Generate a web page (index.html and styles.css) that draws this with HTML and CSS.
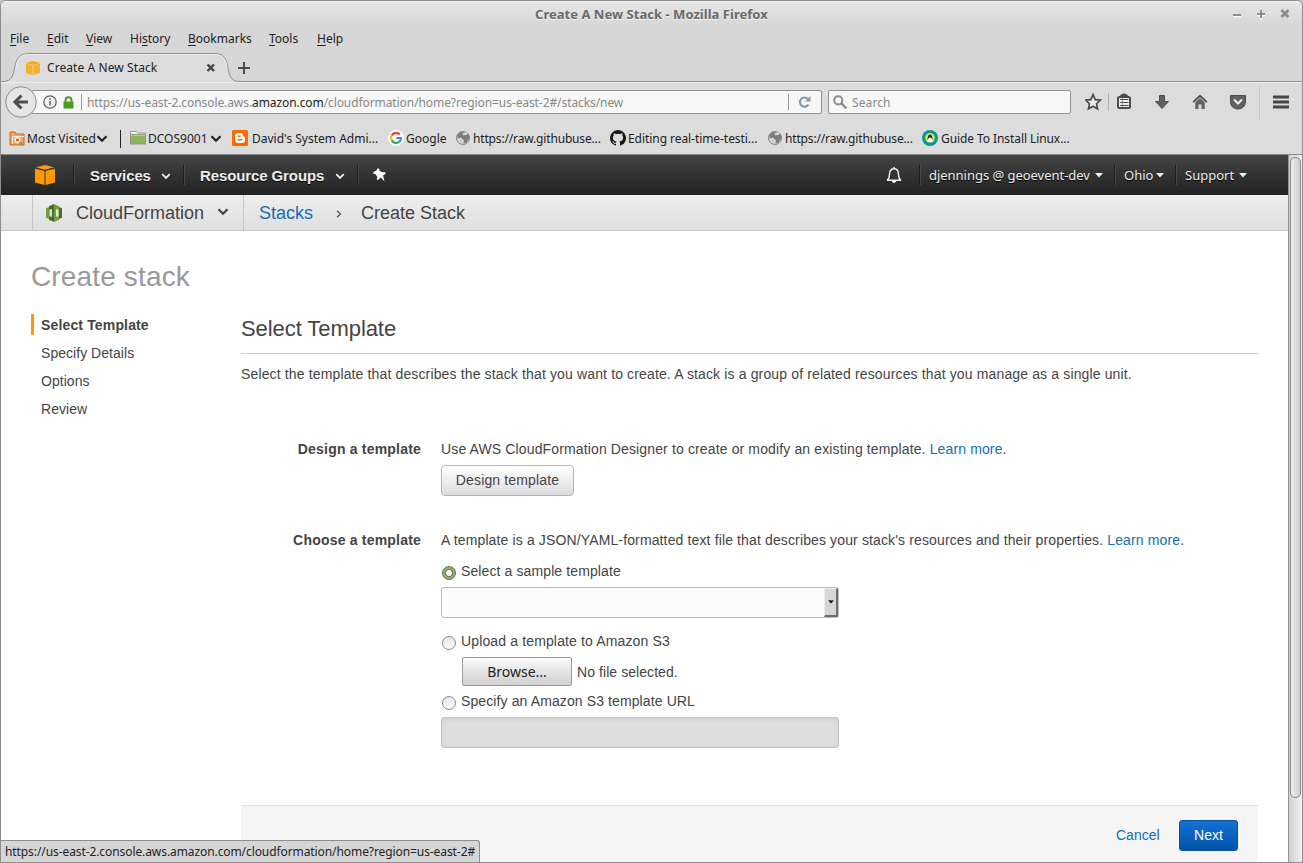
FILE: index.html
```html
<!DOCTYPE html>
<html lang="en">
<head>
<meta charset="utf-8">
<title>Create A New Stack</title>
<link rel="stylesheet" href="styles.css">
</head>
<body>
<svg class="defs" width="0" height="0" aria-hidden="true">
  <symbol id="chev" viewBox="0 0 12 8"><path d="M1.500 1.200 6 5.700l4.500-4.500" fill="none" stroke="currentColor" stroke-width="2.200"/></symbol>
  <symbol id="caret" viewBox="0 0 8 5"><path d="M0 0h8L4 4.500z" fill="currentColor"/></symbol>
  <symbol id="globe" viewBox="0 0 16 16"><circle cx="8" cy="8" r="6.500" fill="#d2d2d2" stroke="#858585"/><path d="M2 5.500 4 3l3-1.500 2 .5-1.500 2 1 1.500 2.500-.5 2-1.500 1.500 3-1 3.500-2.500 3-2.500.5.5-3-1.500-1.500-1.500-1.500-3 1z" fill="#7d7d7d"/><path d="m10 3.500 1.500-1 1 1L11 4.800z" fill="#eee"/></symbol>
</svg>
<div class="window">
  <header class="titlebar">
    <h1 class="title">Create A New Stack - Mozilla Firefox</h1>
    <svg class="win-controls" width="60" height="14" viewBox="0 0 60 14"><g fill="none" stroke="#fff" stroke-width="2.500" transform="translate(0 1)"><path d="M1 8h8M25 7h8M29 3v8"/></g><g fill="none" stroke="#8c8c8c" stroke-width="2"><path d="M1 8h8M25 7h8M29 3v8"/><path d="m49.500 3 7 7m0-7-7 7" stroke-width="2.600"/></g></svg>
  </header>
  <nav class="menubar">
    <span class="mi m1"><u>F</u>ile</span><span class="mi m2"><u>E</u>dit</span><span class="mi m3"><u>V</u>iew</span><span class="mi m4">Hi<u>s</u>tory</span><span class="mi m5"><u>B</u>ookmarks</span><span class="mi m6"><u>T</u>ools</span><span class="mi m7"><u>H</u>elp</span>
  </nav>
  <div class="tabbar">
    <svg class="tab-shape" width="238" height="31" viewBox="0 0 238 31"><path d="M0 30.500h2c8 0 10-5 11.500-13 1.500-10 5-15 14.500-15h185c9 0 12.500 4.500 14 14 1.500 9 3.500 14 11 14V31H0z" fill="#dcdcdc"/><path d="M0 30.500h2c8 0 10-5 11.500-13 1.500-10 5-15 14.500-15h185c9 0 12.500 4.500 14 14 1.500 9 3.500 14 11 14" fill="none" stroke="#8b9096"/><path d="M15 16c1.500-9 5-12.500 13-12.500h185c8 0 11.500 3.500 13 12.500" fill="none" stroke="#ececec"/></svg>
    <div class="tab">
      <svg width="16" height="16" viewBox="0 0 16 16"><path d="m1 3.500 6.700 1.800V15L1 13zM15 3.500 8.300 5.300V15l6.700-2z" fill="#f2b02c"/><path d="m1 3 7-2 7 2-7 1.900z" fill="#f7a90b"/></svg>
      <span class="tab-name">Create A New Stack</span>
      <svg class="tab-x" width="10" height="10" viewBox="0 0 10 10"><path d="m1.500 1.500 6.500 6.500m0-6.500L1.500 8" stroke="#444" stroke-width="2.400"/></svg>
      <svg class="tab-plus" width="14" height="14" viewBox="0 0 14 14"><path d="M1 7h12M7 1v12" stroke="#4c4c4c" stroke-width="2"/></svg>
    </div>
  </div>
  <div class="urlbar">
    <svg class="back" width="34" height="34" viewBox="0 0 34 34"><circle cx="17" cy="17" r="15.300" fill="#e5e5e5" stroke="#8b8b8b"/><path d="M17.500 10.500 11 17l6.500 6.500M12 17h12" fill="none" stroke="#4d4d4d" stroke-width="3"/></svg>
    <div class="address">
      <svg class="info" width="14" height="14" viewBox="0 0 14 14"><circle cx="7" cy="7" r="6.200" fill="none" stroke="#5a5a5a" stroke-width="1.200"/><path d="M7 6v4.500M7 3.300v1.600" stroke="#5a5a5a" stroke-width="1.500"/></svg>
      <svg class="lock" width="11" height="13" viewBox="0 0 11 13"><path d="M2.500 7V4.200a3 3 0 0 1 6 0V7" fill="none" stroke="#4b9b22" stroke-width="2"/><rect x=".5" y="5.500" width="10" height="7" rx=".8" fill="#4b9b22"/></svg>
      <i class="vr"></i>
      <span class="url">https://us-east-2.console.aws.<b>amazon.com</b>/cloudformation/home?region=us-east-2#/stacks/new</span>
      <i class="vr"></i>
      <svg class="reload" width="14" height="14" viewBox="0 0 14 14"><path d="M10.500 9.500A4.600 4.600 0 1 1 9.800 3.800" fill="none" stroke="#8b98a3" stroke-width="2.200"/><path d="M12.500 1v5.500H7z" fill="#8b98a3"/></svg>
    </div>
    <div class="search">
      <svg width="14" height="14" viewBox="0 0 14 14"><circle cx="5.300" cy="5.300" r="4.100" fill="none" stroke="#8d8d8d" stroke-width="2"/><path d="m8.300 8.300 5 5" stroke="#8d8d8d" stroke-width="2.400"/></svg>
      <span>Search</span>
    </div>
    <svg class="tools" width="218" height="36" viewBox="0 0 218 36">
      <path d="m8 10.200 2.200 4.900 5.100.5-3.800 3.600 1 5.100L8 21.700l-4.500 2.600 1-5.100L.7 15.600l5.100-.5z" transform="translate(0 .5)" fill="#eee" stroke="#4b4b4b" stroke-width="1.700"/>
      <path d="M23.500 9v18" stroke="#b2b2b2"/>
      <path d="M36 12.500v-1l3-1.500 3 1.500v1" fill="#555" stroke="#4b4b4b" stroke-width="1.500"/><rect x="33" y="13" width="12" height="11" rx="1.500" fill="#eee" stroke="#4b4b4b" stroke-width="2"/><path d="M35 15.500h8.500M35 18.500h8.500M35 21.500h8.500" stroke="#4b4b4b" stroke-width="1"/><path d="M37.500 14v9" stroke="#777" stroke-width=".7"/>
      <path d="M74.500 11.500h5v6h4l-6.500 7-6.500-7h4z" fill="#606060" stroke="#4b4b4b"/>
      <path d="m108.200 18.200 6.800-6.400 6.800 6.400" fill="none" stroke="#4b4b4b" stroke-width="1.800"/><path d="M110.300 18.500 115 14l4.700 4.500V25h-3.200v-4.500h-3V25h-3.200z" fill="#606060"/>
      <path d="M145.500 11.500h15v6c0 10-15 10-15 0z" fill="#606060" stroke="#4b4b4b"/><path d="m149 15.500 4 4 4-4" fill="none" stroke="#eee" stroke-width="2"/>
      <path d="M174.500 2v34" stroke="#cacaca"/>
      <path d="M188 13h16M188 18h16M188 23h16" stroke="#474747" stroke-width="3"/>
    </svg>
  </div>
  <div class="bookmarks">
    <svg class="bm-i" width="16" height="16" viewBox="0 0 16 16"><path d="M1 15V2h5l1 2h8v11z" fill="#e8a76a" stroke="#c96a1b"/><path d="M3.500 14V6.500H15" fill="none" stroke="#fff3e6"/><circle cx="8.500" cy="10" r="2.400" fill="#cf6d1d" stroke="#fff" stroke-width="1.300"/><path d="m10.500 12 3 2.500" stroke="#cf6d1d" stroke-width="1.500"/></svg>
    <span class="bm b1">Most Visited</span><svg class="chev" width="12" height="8"><use href="#chev"/></svg>
    <i class="bm-sep"></i>
    <svg class="bm-i" width="16" height="16" viewBox="0 0 16 16"><path d="M.5 5V1.500h6l1 1.500h8v2z" fill="#f5f5f5" stroke="#999"/><rect x=".5" y="4.500" width="15" height="9.500" fill="#8fb461" stroke="#8a9a7c"/><path d="M1 5.500h14" stroke="#b6d297"/></svg>
    <span class="bm b2">DCOS9001</span><svg class="chev" width="12" height="8"><use href="#chev"/></svg>
    <svg class="bm-i blogger" width="16" height="16" viewBox="0 0 16 16"><rect width="16" height="16" rx="1.500" fill="#ff6a00"/><path d="M6 3h2.500C11 3 11 5 11.200 6.500c2 .2 1.800 1 1.800 3.500 0 2-1 3-3 3H6c-2 0-3-1-3-3V6c0-2 1-3 3-3z" fill="#fff"/><path d="M6.200 6.300h2M6.200 9.800h3.600" stroke="#ff6a00" stroke-width="1.500" stroke-linecap="round"/></svg>
    <span class="bm b3">David's System Admi...</span>
    <svg class="bm-i" width="16" height="16" viewBox="0 0 16 16"><circle cx="8" cy="8" r="8" fill="#fff"/><g fill="none" stroke-width="2.200"><path d="M11.800 4.500A5 5 0 0 0 3.700 5.600" stroke="#ea4335"/><path d="M3.700 5.600a5 5 0 0 0 0 4.800" stroke="#fbbc05"/><path d="M3.700 10.400a5 5 0 0 0 7.500 1.400" stroke="#34a853"/><path d="M11.200 11.800A5 5 0 0 0 13 8H8.200" stroke="#4285f4"/></g></svg>
    <span class="bm b4">Google</span>
    <svg class="bm-i" width="16" height="16"><use href="#globe"/></svg>
    <span class="bm b5">https://raw.githubuse...</span>
    <svg class="bm-i" width="16" height="16" viewBox="0 0 16 16"><path fill="#171717" d="M8 0a8 8 0 0 0-2.530 15.590c.4.070.55-.17.55-.38v-1.490c-2.230.48-2.700-.95-2.700-.95-.36-.92-.89-1.170-.89-1.170-.73-.5.060-.49.060-.49.800.060 1.230.83 1.230.83.710 1.220 1.870.87 2.330.66.070-.52.280-.87.510-1.070-1.780-.2-3.640-.89-3.640-3.950 0-.87.310-1.590.82-2.150-.08-.2-.36-1.020.08-2.120 0 0 .67-.21 2.200.82a7.600 7.600 0 0 1 4 0c1.530-1.030 2.200-.82 2.200-.82.440 1.100.16 1.920.08 2.120.51.560.82 1.280.82 2.150 0 3.070-1.870 3.750-3.650 3.950.29.250.54.730.54 1.480v2.200c0 .21.150.46.550.38A8 8 0 0 0 8 0z"/></svg>
    <span class="bm b6">Editing real-time-testi...</span>
    <svg class="bm-i" width="16" height="16"><use href="#globe"/></svg>
    <span class="bm b5">https://raw.githubuse...</span>
    <svg class="bm-i" width="16" height="16" viewBox="0 0 16 16"><circle cx="8" cy="8" r="8" fill="#0d9597"/><circle cx="8" cy="7.800" r="4.800" fill="#e4ec52"/><path d="M5.500 10C5.500 6 6.500 4.500 8 4.500s2.500 1.500 2.500 5.500z" fill="#22302e"/><path d="M5.500 12c0-3 1-4.500 2.500-4.500s2.500 1.500 2.500 4.500z" fill="#fff"/></svg>
    <span class="bm b7">Guide To Install Linux...</span>
  </div>

  <div class="viewport">
    <main class="page">
      <nav class="aws-nav">
        <svg class="cube" width="20" height="20" viewBox="0 0 20 20"><path d="m0 3.700 9.500 2.300V20L0 17.500zM20 3.700 10.500 6v14l9.500-2.500zM10 0l9 2.300-9 2.400-9-2.400z" fill="#f90"/></svg>
        <i class="nav-sep"></i>
        <span class="nav-b services">Services</span><svg class="nav-chev" width="10" height="7" viewBox="0 0 12 8"><use href="#chev"/></svg>
        <i class="nav-sep"></i>
        <span class="nav-b groups">Resource Groups</span><svg class="nav-chev" width="10" height="7" viewBox="0 0 12 8"><use href="#chev"/></svg>
        <i class="nav-sep"></i>
        <svg class="pin" width="14" height="14" viewBox="0 0 14 14"><path d="M4.800.2 6.500 1l-.2 1.700 3 1.600 2.400-.2 1 1.400-2.600 2.100 1.400 5.800-3.700-3.800-2.900 2.500-1.200-.6.700-2.600-2-2.800-1.800-.2-.2-1.800 3-1.600z" fill="#fff"/></svg>
        <svg class="bell" width="16" height="18" viewBox="0 0 16 18"><path d="M1 14.200c3-1.400 2-4 2.600-7C4 4 5.700 2.800 8 2.800S12 4 12.400 7.200c.6 3-.4 5.600 2.600 7z" fill="none" stroke="#eee" stroke-width="1.400"/><path d="M6.500 2.500 8 .5l1.500 2zM5.800 14.800h4.400C10 17.600 6 17.600 5.800 14.800z" fill="#eee"/></svg>
        <i class="nav-sep"></i>
        <span class="nav-t user">djennings @ geoevent-dev</span><svg class="nav-caret" width="8" height="5"><use href="#caret"/></svg>
        <i class="nav-sep"></i>
        <span class="nav-t ohio">Ohio</span><svg class="nav-caret" width="8" height="5"><use href="#caret"/></svg>
        <i class="nav-sep"></i>
        <span class="nav-t support">Support</span><svg class="nav-caret" width="8" height="5"><use href="#caret"/></svg>
      </nav>
      <div class="crumbs">
        <div class="service">
          <svg width="16" height="18" viewBox="0 0 16 18"><path d="M8 0 3 2.200v13.600L8 18z" fill="#4b6d2c"/><path d="m8 0 5 2.200v13.600L8 18z" fill="#759c3e"/><path d="M0 4.200 3 3v12l-3-1.200z" fill="#759c3e"/><path d="m16 4.200-3-1.200v12l3-1.200z" fill="#4b6d2c"/><path d="M3.500 5.500 6 5.200v7.600l-2.500-.3zM10 5.200l2.500.3v7l-2.500.3z" fill="#dfe8d3"/></svg>
          <span class="service-name">CloudFormation</span>
          <svg class="crumb-chev" width="12" height="8"><use href="#chev"/></svg>
        </div>
        <a class="stacks">Stacks</a>
        <svg class="arrow" width="6" height="8" viewBox="0 0 6 8"><path d="m1 .7 3.500 3.300L1 7.300" fill="none" stroke="#555" stroke-width="1.300"/></svg>
        <span class="current">Create Stack</span>
      </div>
      <div class="content">
        <h2 class="heading">Create stack</h2>
        <div class="columns">
          <ol class="steps"><li class="on">Select Template</li><li>Specify Details</li><li>Options</li><li>Review</li></ol>
          <section class="form">
            <h3 class="subheading">Select Template</h3>
            <p class="intro">Select the template that describes the stack that you want to create. A stack is a group of related resources that you manage as a single unit.</p>
            <div class="row design">
              <div class="label">Design a template</div>
              <div class="field">
                <p class="desc d1">Use AWS CloudFormation Designer to create or modify an existing template. <a>Learn more</a>.</p>
                <button class="btn">Design template</button>
              </div>
            </div>
            <div class="row choose">
              <div class="label">Choose a template</div>
              <div class="field">
                <p class="desc d2">A template is a JSON/YAML-formatted text file that describes your stack's resources and their properties. <a>Learn more</a>.</p>
                <div class="radio"><i class="dot checked"></i><span class="r1">Select a sample template</span></div>
                <div class="select"><span class="drop"><svg width="6" height="4" viewBox="0 0 8 5"><use href="#caret"/></svg></span></div>
                <div class="radio"><i class="dot"></i><span class="r2">Upload a template to Amazon S3</span></div>
                <div class="file"><button class="browse">Browse...</button><span class="nofile">No file selected.</span></div>
                <div class="radio"><i class="dot"></i><span class="r3">Specify an Amazon S3 template URL</span></div>
                <div class="disabled"></div>
              </div>
            </div>
            <footer class="actions"><a class="cancel">Cancel</a><button class="next">Next</button></footer>
          </section>
        </div>
      </div>
    </main>
    <div class="scrollbar"><div class="thumb"></div></div>
  </div>
  <div class="status">https://us-east-2.console.aws.amazon.com/cloudformation/home?region=us-east-2#</div>
</div>
</body>
</html>
```
FILE: styles.css
```css
* { box-sizing: border-box; }
body { margin: 0; background: #c4c4c4; color: #222; font: 12px/18px "Noto Sans", sans-serif; overflow: hidden; }
h1, h2, h3, p, ol { margin: 0; padding: 0; font-weight: normal; }
svg { display: block; flex: none; }
i { flex: none; }
span, a { white-space: nowrap; }
.defs { position: absolute; }

.window { position: relative; display: flex; flex-direction: column; width: 1303px; height: 863px; border: 1px solid #8e8e8e; border-radius: 6px 6px 0 0; background: #d6d6d6; overflow: hidden; }

.titlebar { display: flex; align-items: center; height: 25px; padding-left: 534px; background: linear-gradient(#fff 0, #e6e6e6 1px, #d6d6d6); }
.title { width: 234px; font-size: 13px; letter-spacing: .03px; font-weight: bold; color: #696969; text-shadow: 0 1px #f4f4f4; white-space: nowrap; }
.win-controls { margin-left: 463px; }

.menubar { display: flex; align-items: center; height: 25px; padding-left: 9px; }
.m1 { width: 37px; } .m2 { width: 39px; } .m3 { width: 44px; } .m4 { width: 58px; } .m5 { width: 81px; } .m6 { width: 48px; }
.mi u { text-underline-offset: 2px; }

.tabbar { display: grid; height: 31px; background: linear-gradient(#8f8f8f, #8f8f8f) 238px 30px / 100% 1px no-repeat; }
.tab-shape, .tab { grid-area: 1 / 1; }
.tab { display: flex; align-items: center; height: 33px; padding-left: 24px; }
.tab-name { width: 159px; margin-left: 6px; letter-spacing: .08px; }
.tab-plus { margin-left: 21px; }

.urlbar { display: flex; align-items: center; height: 41px; padding: 0 0 1px 3px; background: #dcdcdc; box-shadow: inset 0 1px #eee; }
.back { z-index: 1; }
.address, .search { display: flex; flex: none; align-items: center; height: 24px; border: 1px solid #939393; border-radius: 2px; background: #f7f7f7; }
.address { width: 791px; margin-left: -7px; padding-left: 11px; }
.lock { margin-left: 6px; }
.vr { width: 1px; height: 16px; margin-left: 7px; background: #999; }
.url { width: 701px; margin-left: 5px; padding-top: 2px; color: #888; letter-spacing: -.085px; }
.address .vr + .url + .vr { margin-left: 0; }
.url b { color: #222; font-weight: normal; }
.reload { margin-left: 9px; }
.search { width: 243px; margin-left: 6px; padding-left: 4px; color: #888; }
.search span { margin-left: 5px; padding-top: 2px; letter-spacing: .1px; }
.tools { margin-left: 14px; }

.bookmarks { display: flex; align-items: center; height: 32px; padding: 1px 0 0 8px; border-bottom: 1px solid #8b8b8b; background: #dcdcdc; }
.bm-i { margin-bottom: 2px; }
.bm-i + .bm { margin-left: 2px; }
.b1 { width: 69px; } .b2 { width: 62px; } .b3 { width: 136px; } .b4 { width: 49px; } .b5 { width: 137px; letter-spacing: -.16px; } .b6 { width: 139px; letter-spacing: -.06px; } .b7 { letter-spacing: -.08px; }
.bm-sep { width: 1px; height: 18px; margin: 0 9px 0 12px; background: #222; }
.blogger { margin-left: 10px; }
.bookmarks .b3 { margin-left: 4px; }
.bookmarks .b7 { margin-left: 3px; }

.viewport { display: flex; flex: 1; min-height: 0; }
.page { width: 1287px; background: #fff; color: #444; font: 14px/20px "Liberation Sans", Arial, sans-serif; overflow: hidden; }
.scrollbar { width: 14px; padding: 2px 1px; border-left: 1px solid #939393; background: linear-gradient(90deg, #d0d0d0, #f1f1f1); }
.thumb { width: 11px; height: 641px; border: 1px solid #888; border-radius: 5px; background: linear-gradient(90deg, #eee, #cdcdcd); }

.aws-nav { display: flex; align-items: center; height: 40px; padding: 0 0 0 34px; background: linear-gradient(#444, #222); color: #eee; }
.cube { margin-right: 18px; }
.nav-sep { width: 2px; height: 20px; border-left: 1px solid #1c1c1c; background: #4a4a4a; }
.nav-b { margin: 1px 0 0 15px; font-weight: bold; font-size: 15px; letter-spacing: -.11px; text-shadow: 0 1px #000; }
.services { width: 60px; } .groups { width: 124px; }
.nav-chev { margin: 2px 12px 0 11px; }
.pin { margin-left: 14px; }
.bell { margin: 0 17px 0 499px; }
.nav-t { font: 13px/18px "Noto Sans", sans-serif; text-shadow: 0 1px #000; margin-left: 8px; }
.user { width: 162px; letter-spacing: -.03px; } .ohio { width: 28px; } .support { width: 50px; }
.nav-caret { margin: 1px 11px 0 4px; }

.crumbs { display: flex; align-items: center; height: 36px; padding-left: 31px; border-bottom: 1px solid #c6c6c6; background: linear-gradient(#eee, #dfdfdf); font-size: 18px; }
.service { display: flex; align-items: center; width: 212px; height: 35px; padding-left: 13px; border: solid #c6c6c6; border-width: 0 1px; }
.service-name { width: 129px; margin-left: 14px; }
.crumb-chev { margin-left: 12px; margin-top: -2px; }
a { color: #146eb4; }
.stacks { width: 54px; margin-left: 15px; }
.arrow { margin: 2px 0 0 23px; }
.current { margin-left: 19px; }

.content { padding: 28px 30px 0; }
.heading { height: 36px; font-size: 28px; line-height: 36px; letter-spacing: .15px; color: #999; }
.columns { display: flex; margin-top: 19px; letter-spacing: .14px; }
.steps { width: 210px; list-style: none; }
.steps li { height: 20px; margin-bottom: 8px; padding-left: 10px; line-height: 22px; letter-spacing: .04px; }
.steps .on { height: 21px; margin-bottom: 7px; padding-left: 7px; border-left: 3px solid #f90; font-weight: bold; line-height: 23px; letter-spacing: .15px; }
.form { width: 1017px; }
.subheading { height: 40px; border-bottom: 1px solid #ccc; font-size: 22px; line-height: 30px; letter-spacing: -.07px; }
.intro { margin-top: 10px; white-space: nowrap; }
.row { display: flex; }
.design { margin-top: 55px; }
.choose { margin-top: 34px; }
.label { width: 180px; text-align: right; font-weight: bold; letter-spacing: .2px; }
.field { margin-left: 20px; }
.desc { height: 20px; white-space: nowrap; letter-spacing: .133px; }
button { display: block; padding: 0; font: inherit; color: inherit; letter-spacing: inherit; white-space: nowrap; }
.btn { width: 133px; height: 31px; margin-top: 6px; padding-bottom: 2px; border: 1px solid #b5b5b5; border-radius: 4px; background: linear-gradient(#fff, #ddd); }
.radio { display: flex; align-items: flex-start; height: 20px; letter-spacing: .11px; }
.r2 { letter-spacing: .14px; }
.d2 + .radio { margin-top: 11px; }
.dot { width: 14px; height: 14px; margin: 5px 5px 0 1px; border: 1px solid #8a8a8a; border-radius: 50%; background: linear-gradient(#e6e6e6, #fafafa); }
.checked { border-color: #626c58; background: radial-gradient(circle, #fff 0 2.700px, #66784f 3.300px 3.700px, #93b471 4.400px); }
.select { display: flex; justify-content: flex-end; width: 398px; height: 31px; margin: 6px 0 13px; border: 1px solid #bbb; border-radius: 3px; background: #fcfcfc; }
.drop { display: flex; align-items: center; justify-content: center; width: 14px; border: solid #eee; border-width: 1px 2px 2px 1px; border-right-color: #6e6e6e; border-bottom-color: #6e6e6e; background: #d6d6d6; color: #000; }
.file { display: flex; align-items: center; height: 30px; margin: 5px 0 5px 21px; }
.browse { width: 110px; height: 29px; border: 1px solid #999; border-radius: 2px; background: linear-gradient(#fafafa, #d0d0d0); font: 14px "Noto Sans", sans-serif; letter-spacing: 0; color: #222; }
.nofile { margin: 2px 0 0 5px; letter-spacing: .07px; }
.disabled { width: 398px; height: 31px; margin-top: 6px; border: 1px solid #c3c3c3; border-radius: 3px; background: #dfdfdf; box-shadow: inset 0 1px 4px #ccc; }
.actions { display: flex; justify-content: flex-end; height: 70px; margin-top: 57px; padding: 14px 20px 0 0; border-top: 1px solid #e2e2e2; background: #f5f5f5; letter-spacing: 0; }
.cancel { width: 44px; margin: 5px 19px 0 0; }
.next { width: 59px; height: 31px; padding-bottom: 2px; border: 1px solid #0a509c; border-radius: 3px; background: linear-gradient(#1371d2, #0354a8); color: #fff; }

.status { position: absolute; left: -1px; bottom: 0; width: 480px; height: 22px; padding: 2px 0 0 4px; border: 1px solid #8d8d8d; border-bottom: 0; border-top-right-radius: 3px; background: #d6d6d6; letter-spacing: -.085px; white-space: nowrap; }
```
